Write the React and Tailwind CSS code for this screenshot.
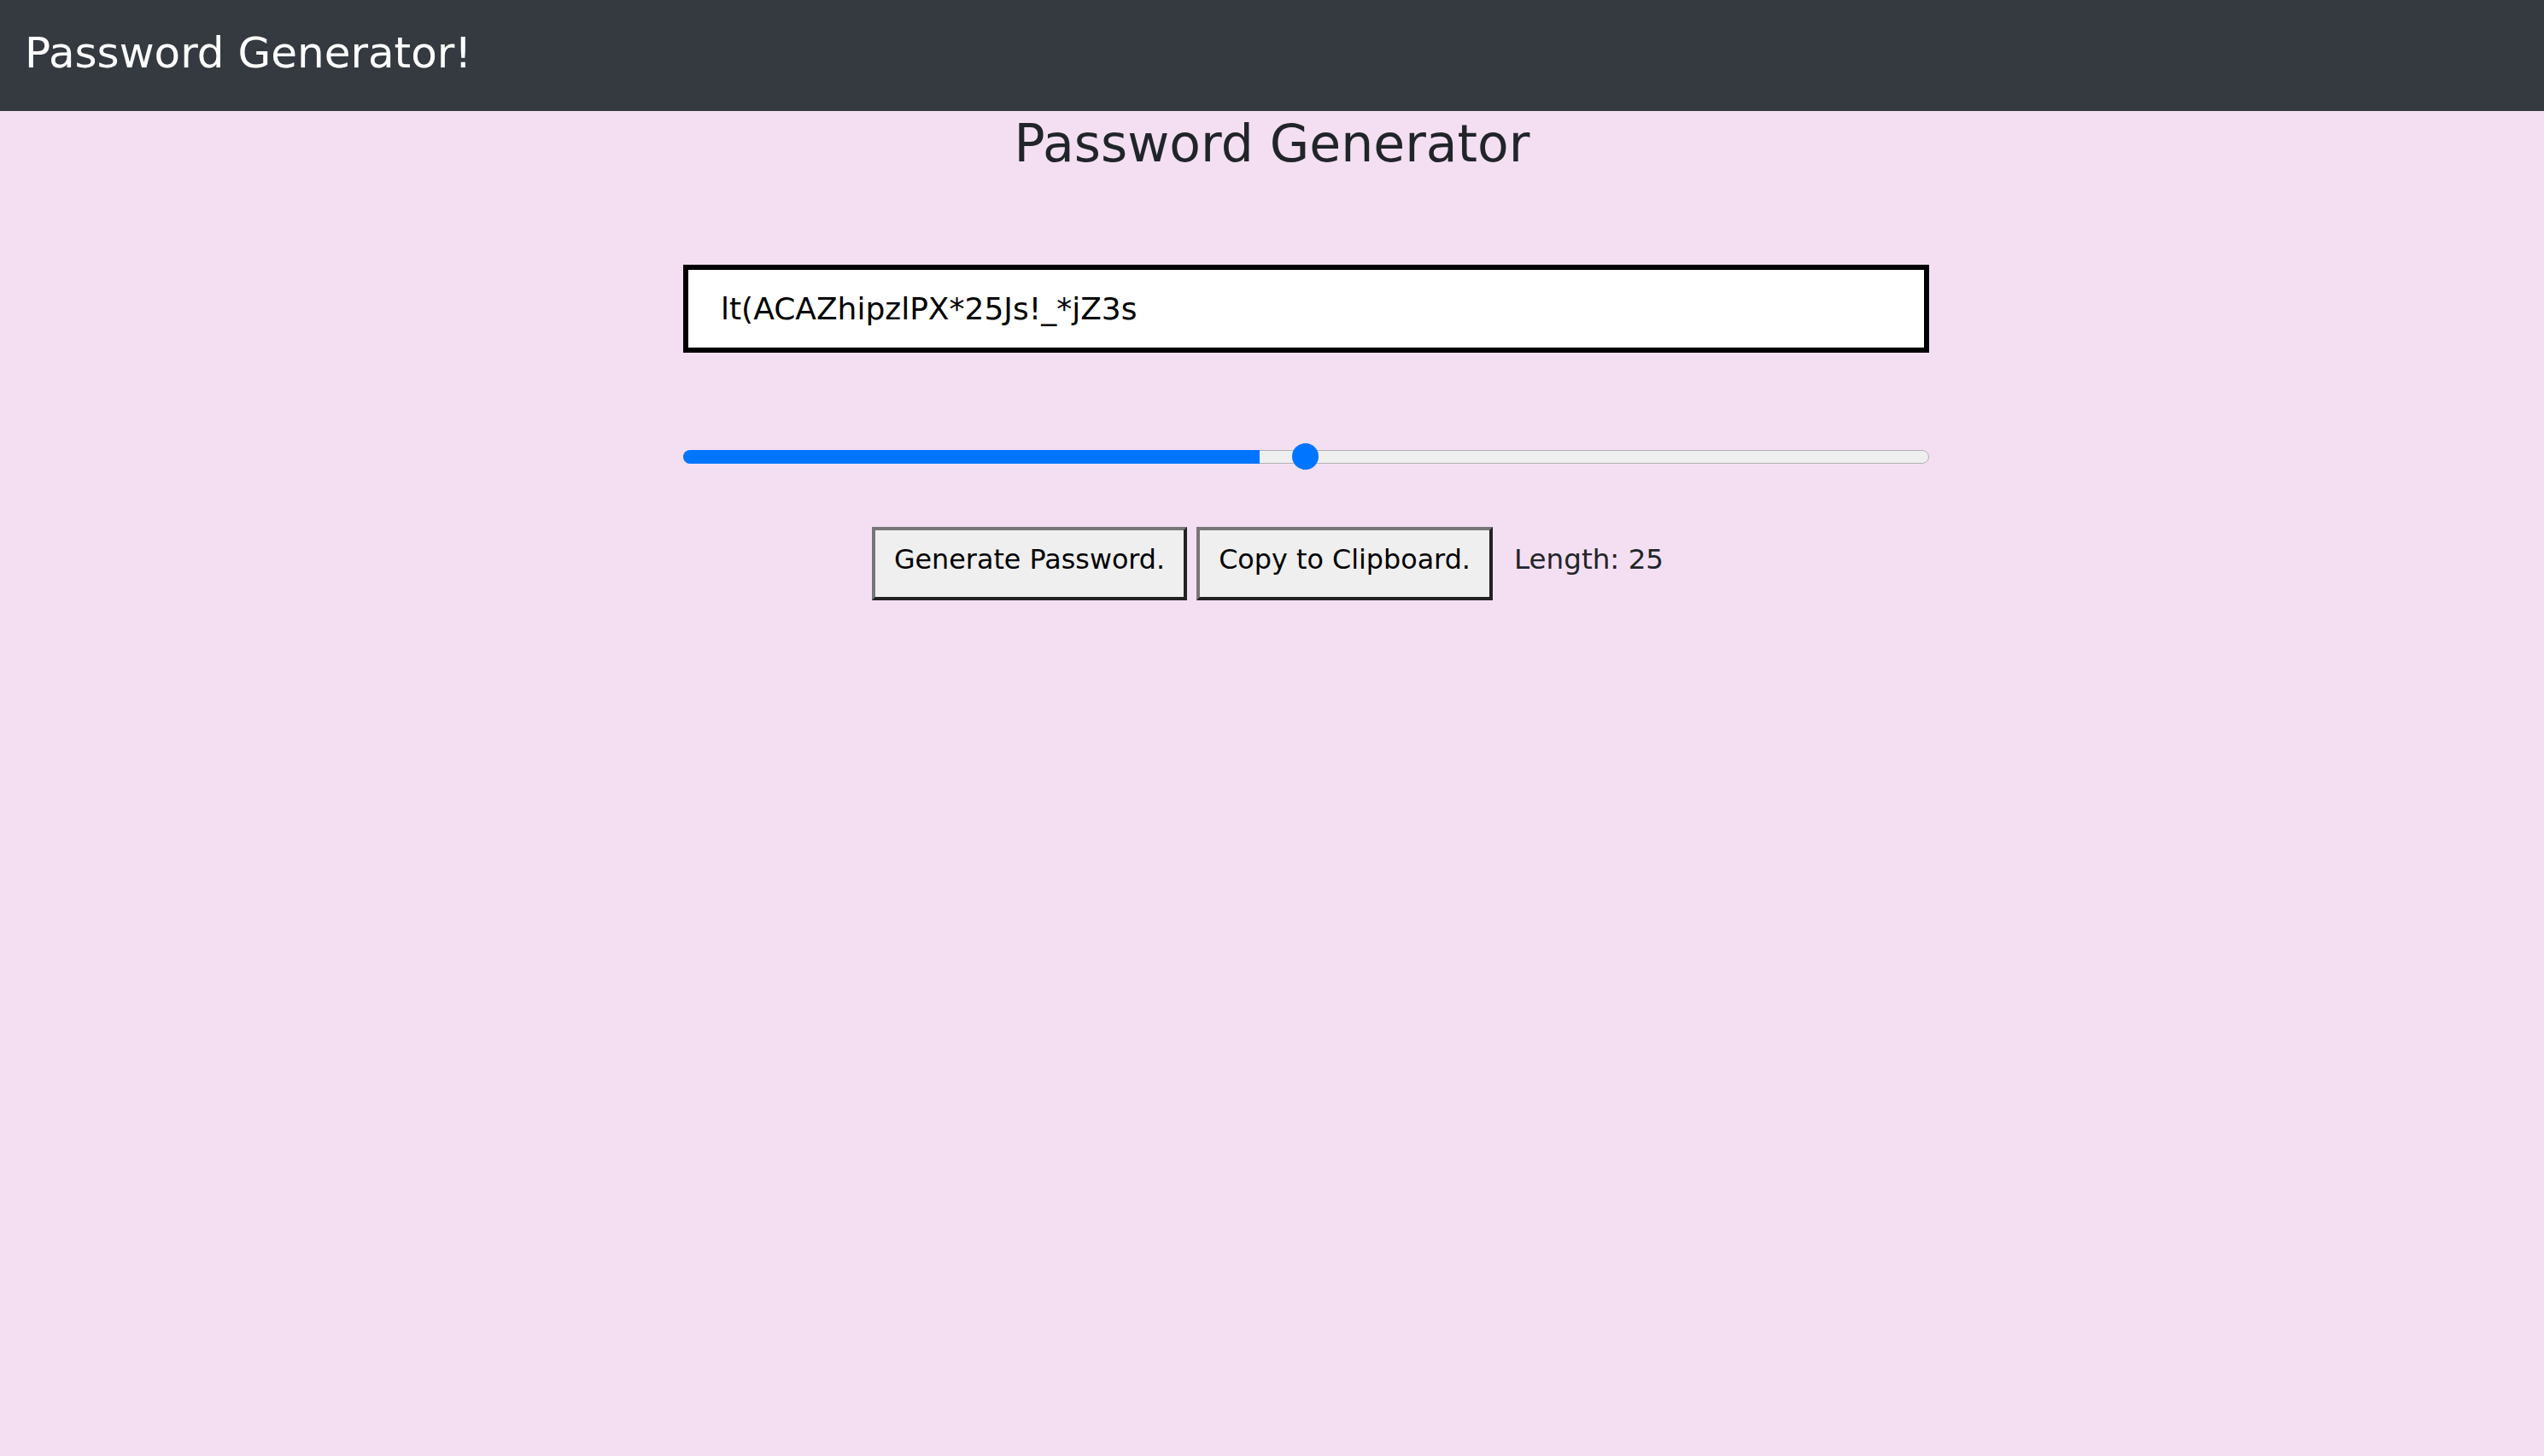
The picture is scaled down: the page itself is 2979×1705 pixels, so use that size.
import React from 'react';

function Slider({ fill }) {
  return (
    <div className="relative flex items-center h-[32px] w-full">
      <div className="relative h-[16px] w-full rounded-full bg-[#efefef] border border-[#b2b2b2]">
        <div className="absolute left-[-1px] top-[-1px] bottom-[-1px] rounded-l-full bg-[#0075ff]" style={{ width: fill }} />
      </div>
      <div className="absolute top-0 left-[713px] w-[31px] h-[31px] rounded-full bg-[#0075ff]" />
    </div>
  );
}

function Button({ children }) {
  return (
    <button className="h-[86px] pt-[15px] pb-[26px] px-[22px] leading-[37px] text-[31.8px] text-black bg-[#efefef] border-4 border-t-[#767676] border-l-[#767676] border-r-[#222222] border-b-[#222222]">
      {children}
    </button>
  );
}

export default function App() {
  return (
    <div className="min-h-screen bg-[#f4dff2] font-['DejaVu_Sans',sans-serif]">
      <nav className="h-[130px] bg-[#343a40] flex items-center px-[29px] pb-[5px]">
        <span className="text-white text-[50px]">Password Generator!</span>
      </nav>

      <div className="flex flex-col items-center">
        <h1 className="mt-[2px] text-[60px] leading-[1.2] text-[#212529]">Password Generator</h1>

        <div className="mt-[106px] ml-[80px] w-[1459px] flex flex-col">
          <input
            readOnly
            value="lt(ACAZhipzlPX*25Js!_*jZ3s"
            className="h-[103px] w-full border-[6px] border-black bg-white pl-[38px] text-[36px] text-black outline-none"
          />
          <div className="mt-[106px]">
            <Slider fill={675} />
          </div>
        </div>

        <div className="mt-[66px] pr-[10px] flex items-baseline">
          <Button>Generate Password.</Button>
          <div className="ml-[11px]">
            <Button>Copy to Clipboard.</Button>
          </div>
          <span className="ml-[25px] text-[32.6px] text-[#212529]">Length: 25</span>
        </div>
      </div>
    </div>
  );
}
